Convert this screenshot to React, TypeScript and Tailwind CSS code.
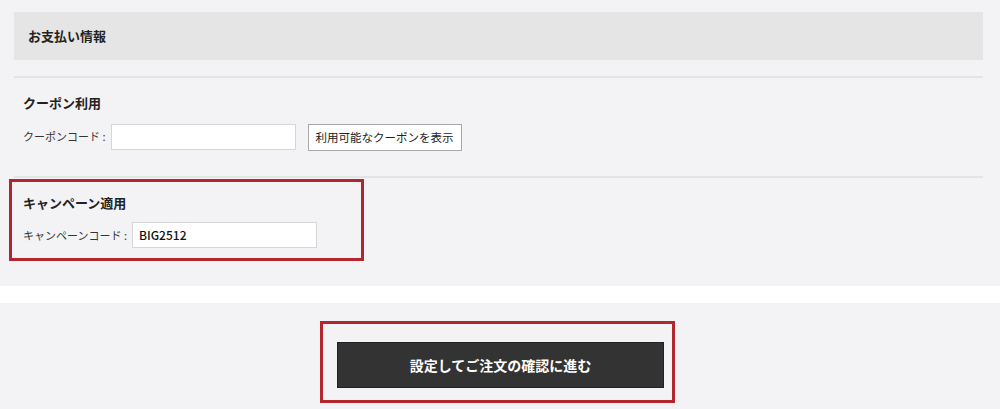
import { ReactNode } from 'react';

const FONT = '"Noto Sans CJK JP", "Noto Sans", "Liberation Sans", sans-serif';

function Field({ label, value }: { label: string; value?: string }) {
  return (
    <div className="flex items-center">
      <span className="text-[11px] text-[#333] mr-[5px]">{label} :</span>
      <div className="w-[185px] h-[26px] bg-white border border-[#d6d6d6] flex items-center px-[6px] text-[12px] font-medium text-[#111]">
        {value}
      </div>
    </div>
  );
}

function Section({ title, children }: { title: string; children: ReactNode }) {
  return (
    <div className="pl-[9px]">
      <h3 className="text-[13px] font-bold text-[#222] leading-[20px]">{title}</h3>
      <div className="mt-[9px]">{children}</div>
    </div>
  );
}

export default function App() {
  return (
    <div className="w-[1000px] h-[409px] bg-white flex flex-col overflow-hidden" style={{ fontFamily: FONT }}>
      {/* お支払い情報 */}
      <div className="h-[286px] bg-[#f3f3f5] pl-[14px] pr-[17px] pt-[12px] shrink-0">
        <div className="h-[48px] bg-[#e5e5e5] flex items-center pl-[14px] text-[13px] font-bold text-[#222]">
          お支払い情報
        </div>
        <div className="mt-[16px] h-[2px] bg-[#e4e4e6]" />

        <div className="pt-[15px]">
          <Section title="クーポン利用">
            <div className="flex items-center">
              <Field label="クーポンコード" />
              <button className="ml-[12px] mt-[2px] h-[27px] px-[7px] bg-white border border-[#a8a8a8] text-[11.5px] text-[#222]">
                利用可能なクーポンを表示
              </button>
            </div>
          </Section>
        </div>

        <div className="mt-[25px] h-[2px] bg-[#e4e4e6]" />

        <div className="relative pt-[15px]">
          <div className="absolute left-[-5px] top-[1px] w-[355px] h-[82px] border-[3px] border-[#b1272d] pointer-events-none" />
          <Section title="キャンペーン適用">
            <Field label="キャンペーンコード" value="BIG2512" />
          </Section>
        </div>
      </div>

      <div className="h-[17px] shrink-0 bg-white" />

      {/* 注文確認へ */}
      <div className="flex-1 bg-[#f3f3f5] flex justify-center pt-[18px]">
        <div className="border-[3px] border-[#b1272d] w-[355px] h-[82px] flex justify-center pt-[18px] ml-[-6px]">
          <button className="w-[327px] h-[46px] bg-[#333] text-white text-[14px] font-bold ml-[7px] border border-[#222]">
            設定してご注文の確認に進む
          </button>
        </div>
      </div>
    </div>
  );
}
